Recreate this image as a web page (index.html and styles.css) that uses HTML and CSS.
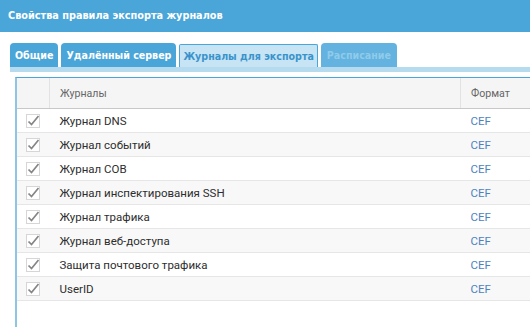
FILE: index.html
```html
<!DOCTYPE html>
<html lang="ru">
<head>
  <meta charset="UTF-8" />
  <title>Свойства правила экспорта журналов</title>
  <link rel="stylesheet" href="styles.css">
</head>
<body>
  <div class="title-bar">Свойства правила экспорта журналов</div>

  <div class="content">
    <div class="tabs">
      <div class="tab">Общие</div>
      <div class="tab">Удалённый сервер</div>
      <div class="tab active">Журналы для экспорта</div>
      <div class="tab disabled">Расписание</div>
    </div>
    <div class="tab-strip"></div>

    <div class="panel">
      <table class="grid">
        <thead>
          <tr>
            <th class="col-check"></th>
            <th class="col-name">Журналы</th>
            <th class="col-format">Формат</th>
          </tr>
        </thead>
        <tbody id="rows"></tbody>
      </table>
    </div>
  </div>

  <script>
    const logs = [
      'Журнал DNS',
      'Журнал событий',
      'Журнал СОВ',
      'Журнал инспектирования SSH',
      'Журнал трафика',
      'Журнал веб-доступа',
      'Защита почтового трафика',
      'UserID'
    ];

    const checkSvg =
      '<svg class="check" width="14" height="14" viewBox="0 0 14 14">' +
      '<rect x="0.5" y="0.5" width="13" height="13" fill="#fff" stroke="#d6d6d6"/>' +
      '<path d="M2.5 7.5 L5.5 10.5 L12.5 2" fill="none" stroke="#858585" stroke-width="1.7"/>' +
      '</svg>';

    const tbody = document.getElementById('rows');
    logs.forEach(function (name) {
      const tr = document.createElement('tr');
      tr.innerHTML =
        '<td class="col-check">' + checkSvg + '</td>' +
        '<td class="col-name">' + name + '</td>' +
        '<td class="col-format"><span class="fmt">CEF</span></td>';
      tbody.appendChild(tr);
    });
  </script>
</body>
</html>
```

FILE: styles.css
```css
body {
  margin: 0;
  background: #fff;
  font-family: Roboto, "Liberation Sans", sans-serif;
  overflow: hidden;
}

.title-bar {
  height: 32px;
  line-height: 32px;
  background: #4aa5d8;
  color: #fff;
  font-family: "DejaVu Sans Condensed", "Liberation Sans", sans-serif;
  font-weight: bold;
  font-size: 10.8px;
  padding-left: 8px;
}

.content {
  padding: 11px 0 0 10px;
}

.tabs {
  display: flex;
  gap: 3px;
  align-items: flex-end;
}

.tab {
  height: 24px;
  line-height: 24px;
  padding: 0 5px;
  background: #4aa5d8;
  color: #fff;
  font-family: "DejaVu Sans Condensed", "Liberation Sans", sans-serif;
  font-weight: bold;
  font-size: 10.6px;
  border-radius: 4px 4px 0 0;
  box-sizing: border-box;
}

.tab.active {
  background: #c6e4f4;
  color: #3b93cb;
  border: 1px solid #4aa5d8;
  border-bottom: none;
  line-height: 22px;
  height: 23px;
  padding: 0 3px;
  border-radius: 2px 2px 0 0;
}

.tab.disabled {
  background: #63b2df;
  color: #8fcbea;
  padding: 0 6px;
}

.tab-strip {
  height: 5px;
  background: #b6dbef;
}

.panel {
  margin: 5px 0 0 5px;
  border-top: 1px solid #4aa5d8;
  border-left: 2px solid #8dc5e2;
  height: 260px;
  overflow: hidden;
}

.grid {
  border-collapse: collapse;
  width: 560px;
  font-size: 11.5px;
  color: #2e2e2e;
}

.grid th {
  height: 30px;
  background: #f5f5f5;
  color: #666;
  font-weight: normal;
  font-size: 10.6px;
  text-align: left;
  padding: 0 10px;
  border-bottom: 1px solid #c8c8c8;
  border-left: 1px solid #e2e2e2;
}

.grid th:first-child {
  border-left: none;
}

.grid td {
  height: 23px;
  padding: 0 10px;
  border-bottom: 1px solid #e6e6e6;
}

.grid tbody tr:nth-child(even) td {
  background: #f8f8f8;
}

.col-check {
  width: 12px;
  text-align: center;
}

.grid td.col-check {
  padding: 0 0 0 9px;
}

.check {
  display: block;
}

.col-name {
  width: 390px;
}

.fmt {
  color: #4d83bd;
}
```
